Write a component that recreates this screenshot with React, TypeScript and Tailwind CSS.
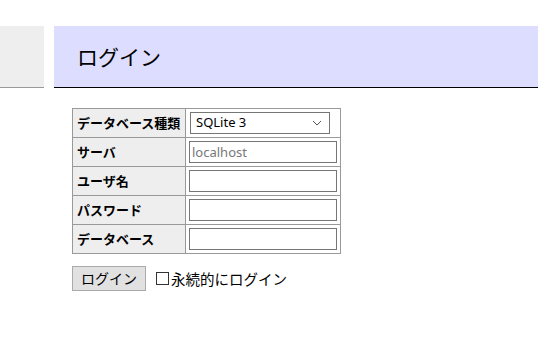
import React from 'react';

const jp = "font-['Verdana','DejaVu_Sans','Noto_Sans_CJK_JP',sans-serif]";

const rows = [
  { label: 'サーバ', value: '', placeholder: 'localhost' },
  { label: 'ユーザ名', value: '', placeholder: '' },
  { label: 'パスワード', value: '', placeholder: '' },
  { label: 'データベース', value: '', placeholder: '' },
];

function App() {
  return (
    <div className={`min-h-[363px] w-[538px] overflow-hidden bg-white text-[14px] text-black ${jp}`}>
      <div className="flex pt-[26px]">
        <div className="h-[62px] w-[44px] shrink-0 border-b border-[#999] bg-[#eee]" />
        <div className="ml-[10px] flex h-[62px] flex-1 items-center border-b border-black bg-[#ddf] pl-[23px]">
          <h2 className="text-[21px] font-normal leading-none font-['Noto_Sans_CJK_JP',sans-serif]">ログイン</h2>
        </div>
      </div>

      <div className="pl-[72px] pt-[20px]">
        <table className="border-collapse border border-[#999]">
          <tbody>
            <tr>
              <th className="h-[28px] w-[113px] border border-[#999] bg-[#eee] px-[4px] py-0 text-left text-[13px] font-bold whitespace-nowrap font-['Noto_Sans_CJK_JP',sans-serif]">
                データベース種類
              </th>
              <td className="border border-[#999] px-[3px] py-[3px]">
                <div className="ml-[1px] flex h-[22px] w-[140px] items-center justify-between border border-[#767676] bg-white pr-[7px] pl-[5px]">
                  <span className="text-[13px] font-['Noto_Sans',sans-serif]">SQLite 3</span>
                  <svg width="10" height="6" viewBox="0 0 10 6" fill="none" stroke="#555" strokeWidth="1">
                    <path d="M1 1l4 4 4-4" />
                  </svg>
                </div>
              </td>
            </tr>
            {rows.map((r) => (
              <tr key={r.label}>
                <th className="h-[28px] border border-[#999] bg-[#eee] px-[4px] py-0 text-left text-[13px] font-bold whitespace-nowrap font-['Noto_Sans_CJK_JP',sans-serif]">
                  {r.label}
                </th>
                <td className="border border-[#999] px-[3px] py-[3px]">
                  <input
                    className="block h-[22px] w-[148px] border border-[#767676] px-[2px] text-[13px] outline-none placeholder:text-[#777] font-['Noto_Sans',sans-serif]"
                    placeholder={r.placeholder}
                    defaultValue={r.value}
                  />
                </td>
              </tr>
            ))}
          </tbody>
        </table>

        <div className="mt-[12px] flex items-center">
          <button
            type="button"
            className="h-[25px] w-[74px] border border-[#aaa] bg-[#e1e1e1] text-[14px] font-['Noto_Sans_CJK_JP',sans-serif]"
          >
            ログイン
          </button>
          <label className="ml-[10px] flex items-center text-[14.5px] font-['Noto_Sans_CJK_JP',sans-serif]">
            <span className="mr-[2px] inline-block h-[13px] w-[13px] border border-[#333] bg-white" />
            永続的にログイン
          </label>
        </div>
      </div>
    </div>
  );
}

export default App;
